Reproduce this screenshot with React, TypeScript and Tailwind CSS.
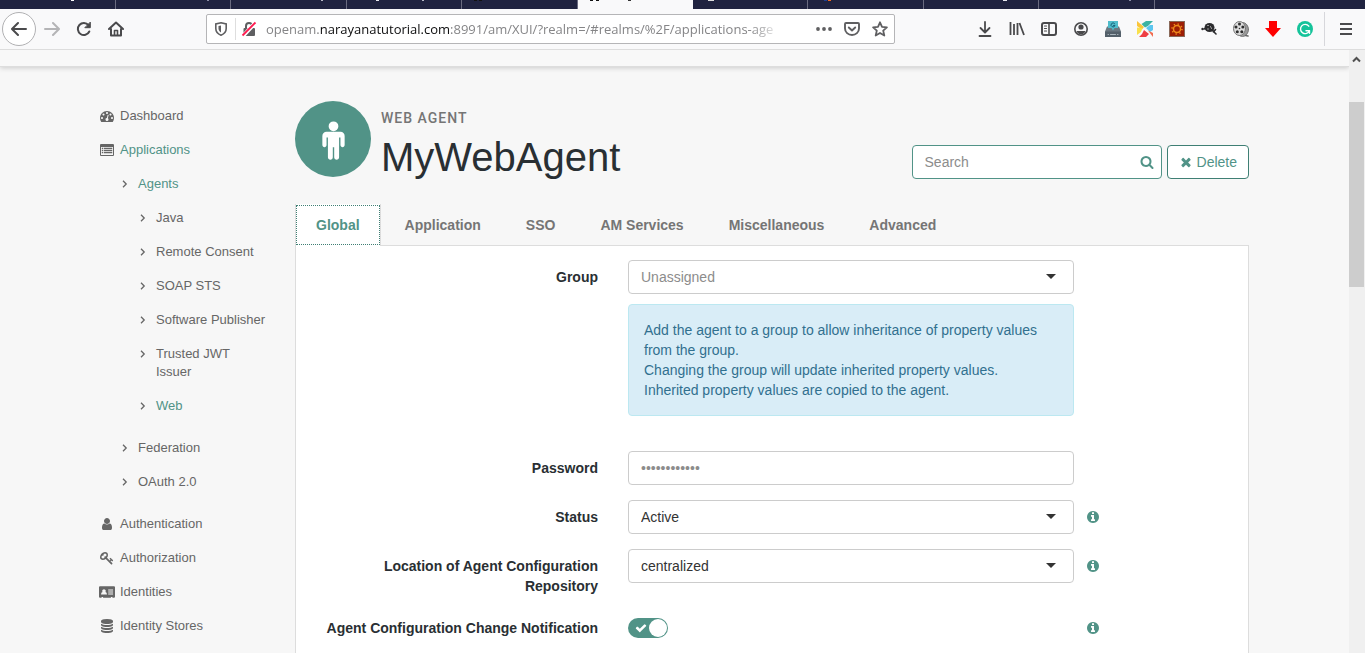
import React, { useState } from 'react';

const FA = {
  dashboard:
    'M384 1152q0-53-37.5-90.5t-90.5-37.5-90.5 37.5-37.5 90.5 37.5 90.5 90.5 37.5 90.5-37.5 37.5-90.5zm192-448q0-53-37.5-90.5t-90.5-37.5-90.5 37.5-37.5 90.5 37.5 90.5 90.5 37.5 90.5-37.5 37.5-90.5zm428 481l101-382q6-26-7.5-48.5t-38.5-29.5-48 6.5-30 39.5l-101 382q-60 5-107 43.5t-63 98.5q-20 77 20 146t117 89 146-20 89-117q16-60-6-117t-72-91zm660-33q0-53-37.5-90.5t-90.5-37.5-90.5 37.5-37.5 90.5 37.5 90.5 90.5 37.5 90.5-37.5 37.5-90.5zm-640-640q0-53-37.5-90.5t-90.5-37.5-90.5 37.5-37.5 90.5 37.5 90.5 90.5 37.5 90.5-37.5 37.5-90.5zm448 192q0-53-37.5-90.5t-90.5-37.5-90.5 37.5-37.5 90.5 37.5 90.5 90.5 37.5 90.5-37.5 37.5-90.5zm320 448q0 261-141 483-19 29-54 29h-1402q-35 0-54-29-141-221-141-483 0-182 71-348t191-286 286-191 348-71 348 71 286 191 191 286 71 348z',
  list:
    'M0 256a130 130 0 0 1 130-130h1532a130 130 0 0 1 130 130v1280a130 130 0 0 1-130 130h-1532a130 130 0 0 1-130-130zM128 512v1024h1536v-1024zM230 600h180v180h-180zM500 600h1070v180h-1070zM230 870h180v180h-180zM500 870h1070v180h-1070zM230 1140h180v180h-180zM500 1140h1070v180h-1070z',
  user:
    'M1536 1399q0 109-62.5 187t-150.5 78h-854q-88 0-150.5-78t-62.5-187q0-85 8.5-160.5t31.5-152 58.5-131 94-89 134.5-34.500q131 128 313 128t313-128q76 0 134.5 34.5t94 89 58.5 131 31.5 152 8.5 160.5zm-256-887q0 159-112.5 271.5t-271.5 112.5-271.5-112.5-112.5-271.5 112.5-271.5 271.5-112.5 271.5 112.5 112.5 271.5z',
  key:
    'M832 512q0-80-56-136t-136-56-136 56-56 136q0 42 19 83-41-19-83-19-80 0-136 56t-56 136 56 136 136 56 136-56 56-136q0-42-19-83 41 19 83 19 80 0 136-56t56-136zm851 704q0 17-49 66t-66 49q-9 0-28.5-16t-36.5-33-38.5-40-24.5-26l-96 96 220 220q28 28 28 68 0 42-39 81t-81 39q-40 0-68-28l-671-671q-176 131-365 131-163 0-265.5-102.5t-102.5-265.5q0-160 95-313t248-248 313-95q163 0 265.5 102.5t102.5 265.5q0 189-131 365l355 355 96-96q-3-3-26-24.5t-40-38.5-33-36.5-16-28.5q0-17 49-66t66-49q13 0 23 10 6 6 46 44.5t82 79.5 86.5 86 73 78 28.5 41z',
  card:
    'M-128 288a130 130 0 0 1 130-130h1788a130 130 0 0 1 130 130v1216a130 130 0 0 1-130 130h-200v-110h-190v110h-1008v-110h-190v110h-200a130 130 0 0 1-130-130zM130 1230h760q0-300-190-330a230 230 0 1 0-380 0q-190 30-190 330zM1050 580v130h620v-130zM1050 840v130h620v-130zM1050 1100v130h620v-130z',
  database:
    'M896 768q237 0 443-43t325-127v170q0 69-103 128t-280 93.5-385 34.5-385-34.5-280-93.5-103-128v-170q119 84 325 127t443 43zm0 768q237 0 443-43t325-127v170q0 69-103 128t-280 93.5-385 34.5-385-34.5-280-93.5-103-128v-170q119 84 325 127t443 43zm0-384q237 0 443-43t325-127v170q0 69-103 128t-280 93.5-385 34.5-385-34.5-280-93.5-103-128v-170q119 84 325 127t443 43zm0-1152q208 0 385 34.5t280 93.5 103 128v128q0 69-103 128t-280 93.5-385 34.5-385-34.5-280-93.5-103-128v-128q0-69 103-128t280-93.5 385-34.5z',
  male:
    'M1408 736v416q0 40-28 68t-68 28-68-28-28-68v-352h-64v912q0 46-33 79t-79 33-79-33-33-79v-464h-64v464q0 46-33 79t-79 33-79-33-33-79v-912h-64v352q0 40-28 68t-68 28-68-28-28-68v-416q0-80 56-136t136-56h640q80 0 136 56t56 136zm-288-448q0 93-65.5 158.5t-158.5 65.5-158.5-65.5-65.5-158.5 65.5-158.5 158.5-65.5 158.5 65.5 65.5 158.5z',
  search:
    'M1216 832q0-185-131.5-316.5t-316.5-131.5-316.5 131.5-131.5 316.5 131.5 316.5 316.5 131.5 316.5-131.5 131.5-316.5zm512 832q0 52-38 90t-90 38q-54 0-90-38l-343-342q-179 124-399 124-143 0-273.5-55.5t-225-150-150-225-55.5-273.5 55.5-273.5 150-225 225-150 273.5-55.5 273.5 55.5 225 150 150 225 55.5 273.5q0 220-124 399l343 343q37 37 37 90z',
  times:
    'M1490 1322q0 40-28 68l-136 136q-28 28-68 28t-68-28l-294-294-294 294q-28 28-68 28t-68-28l-136-136q-28-28-28-68t28-68l294-294-294-294q-28-28-28-68t28-68l136-136q28-28 68-28t68 28l294 294 294-294q28-28 68-28t68 28l136 136q28 28 28 68t-28 68l-294 294 294 294q28 28 28 68z',
  info:
    'M1152 1376v-160q0-14-9-23t-23-9h-96v-512q0-14-9-23t-23-9h-320q-14 0-23 9t-9 23v160q0 14 9 23t23 9h96v320h-96q-14 0-23 9t-9 23v160q0 14 9 23t23 9h448q14 0 23-9t9-23zm-128-896v-160q0-14-9-23t-23-9h-192q-14 0-23 9t-9 23v160q0 14 9 23t23 9h192q14 0 23-9t9-23zm640 416q0 209-103 385.5t-279.5 279.5-385.5 103-385.5-103-279.5-279.5-103-385.5 103-385.5 279.5-279.5 385.5-103 385.5 103 279.5 279.5 103 385.5z',
  check:
    'M1671 566q0 40-28 68l-724 724-136 136q-28 28-68 28t-68-28l-136-136-362-362q-28-28-28-68t28-68l136-136q28-28 68-28t68 28l294 295 656-657q28-28 68-28t68 28l136 136q28 28 28 68z',
};

type IconName = keyof typeof FA;

function Icon({ name, className }: { name: IconName; className?: string }) {
  return (
    <svg viewBox="0 0 1792 1792" fill="currentColor" fillRule="evenodd" className={className} overflow="visible" aria-hidden="true">
      <path d={FA[name]} />
    </svg>
  );
}

// ---------- Browser chrome ----------

// Bottom edge of the tab titles and favicons: [x, width, color]
const browserTabs: { active?: boolean; marks: [number, number, string][] }[] = [
  { marks: [[71, 3, '#ffffff']] },
  { marks: [[91, 2, '#8d8fa8']] },
  { marks: [[90, 2, '#b9bac8']] },
  { marks: [[29, 3, '#e8e8f0'], [75, 2, '#b9bac8']] },
  { marks: [[12, 3, '#111111'], [17, 3, '#111111']] },
  { active: true, marks: [[12, 3, '#111111'], [18, 3, '#111111'], [50, 3, '#333333']] },
  { marks: [[15, 6, '#dddddd']] },
  { marks: [[16, 3, '#1d3f94'], [20, 3, '#f26a21']] },
  { marks: [[79, 4, '#e8e8f0']] },
  { marks: [[90, 2, '#8d8fa8']] },
];

function TabStrip() {
  return (
    <div className="flex h-[9px] bg-[#202340]">
      <div className="flex w-[1155px]">
        {browserTabs.map((tab, i) => (
          <div
            key={i}
            className={tab.active ? 'flex-1 bg-[#f9f9fa]' : 'flex-1 border-r border-[#6a6b80]'}
          >
            <svg width="110" height="2" className="block" aria-hidden="true">
              {tab.marks.map(([x, w, color]) => (
                <rect key={x} x={x} y="0" width={w} height="1" fill={color} />
              ))}
            </svg>
          </div>
        ))}
      </div>
    </div>
  );
}

interface ChromeButtonProps {
  label: string;
  children: React.ReactNode;
  className?: string;
}

function ChromeButton({ label, children, className = 'text-[#4a4a4c]' }: ChromeButtonProps) {
  return (
    <button type="button" aria-label={label} className={`flex h-8 w-8 shrink-0 items-center justify-center ${className}`}>
      <svg width="16" height="16" viewBox="0 0 16 16" fill="none" stroke="currentColor" strokeWidth="2" strokeLinecap="round" strokeLinejoin="round">
        {children}
      </svg>
    </button>
  );
}

function AddressBar() {
  return (
    <div className="flex h-[30px] min-w-0 flex-1 items-center rounded-[2px] border border-[#b5b5b7] bg-white pr-[6px] pl-[6px] text-[#5f5f61]">
      <svg width="16" height="16" viewBox="0 0 16 16" fill="none" stroke="currentColor" className="shrink-0">
        <path d="M8 1.800l5.200 1.200v4.500c0 3-2.200 5.500-5.200 6.700-3-1.200-5.200-3.700-5.200-6.700V3z" strokeWidth="1.600" />
        <path d="M8 4.500v7c-1.500-.8-2.500-2.300-2.500-4V5z" fill="currentColor" stroke="none" />
      </svg>
      <span className="ml-[6px] h-[22px] w-px bg-[#dedede]" />
      <svg width="16" height="16" viewBox="0 0 16 16" fill="none" className="ml-[5px] shrink-0">
        <path d="M5 8V5a3 3 0 0 1 6 0v3" stroke="#5f5f61" strokeWidth="2" />
        <rect x="2.500" y="7" width="11.500" height="8" rx="1" fill="#5f5f61" />
        <path d="M1.500 15.500L14.500 1.500" stroke="#fff" strokeWidth="4" />
        <path d="M1.500 14.500L14.500 1.500" stroke="#ff1a4f" strokeWidth="1.800" />
      </svg>
      <div
        role="textbox"
        aria-label="Address"
        className="ml-[9px] min-w-0 flex-1 font-['Open_Sans',sans-serif] text-[13px] leading-5 whitespace-nowrap text-[#858587] [mask-image:linear-gradient(to_left,transparent,black_32px)]"
      >
        openam.<span className="text-[#0c0c0d]">narayanatutorial.com</span>
        :8991/am/XUI/?realm=/#realms/%2F/applications-age
      </div>
      <div className="ml-[34px] flex shrink-0 items-center gap-3">
        <svg width="16" height="16" viewBox="0 0 16 16" fill="currentColor">
          <circle cx="2" cy="8" r="1.900" />
          <circle cx="8" cy="8" r="1.900" />
          <circle cx="14" cy="8" r="1.900" />
        </svg>
        <svg width="16" height="16" viewBox="0 0 16 16" fill="none" stroke="currentColor" strokeWidth="1.900" strokeLinecap="round" strokeLinejoin="round">
          <path d="M2 2h12a1 1 0 0 1 1 1v4.500a7 6.500 0 0 1-14 0V3a1 1 0 0 1 1-1z" />
          <path d="M4.800 6.500L8 9.500l3.200-3" />
        </svg>
        <svg width="16" height="16" viewBox="0 0 16 16" fill="none" stroke="currentColor" strokeWidth="1.800" strokeLinejoin="round">
          <path d="M8 1.300l2 4.500 4.900.5-3.700 3.300 1.100 4.900L8 12l-4.300 2.500 1.100-4.900L1.100 6.300 6 5.800z" />
        </svg>
      </div>
    </div>
  );
}

function Extensions() {
  return (
    <div className="flex shrink-0">
      <ChromeButton label="Downloads">
        <path d="M8 1v10M3.500 7L8 11.500 12.500 7M2.500 15h11" strokeWidth="1.800" />
      </ChromeButton>
      <ChromeButton label="Library">
        <path d="M1.500 1v13M5 3v11M8.500 2v12M10.500 2l4.500 12" strokeLinecap="butt" strokeWidth="1.800" />
      </ChromeButton>
      <ChromeButton label="Sidebars">
        <rect x="1" y="2" width="14" height="12" rx="2" />
        <path d="M8 2v12" strokeWidth="1.600" />
        <path d="M3.500 5h2M3.500 7.500h2M3.500 10h2" strokeWidth="1.200" />
      </ChromeButton>
      <ChromeButton label="Account">
        <circle cx="8" cy="8" r="6.200" strokeWidth="1.600" />
        <circle cx="8" cy="6" r="2.600" fill="currentColor" stroke="none" />
        <path d="M3.500 10h9c-.8 2.300-2.500 3.500-4.500 3.500s-3.700-1.200-4.500-3.500z" fill="currentColor" stroke="none" />
      </ChromeButton>
      <ChromeButton label="Drive saver">
        <path d="M2 5.500h12l2 5V16H0v-5.500z" fill="#6b7780" stroke="none" />
        <path d="M0 10.500h16V16H0z" fill="#54606a" stroke="none" />
        <path d="M3 0h10v7H9.500L8 9.500 6.500 7H3z" fill="#4fbccb" stroke="none" />
        <path d="M9.600 2.600A2 2 0 1 0 10 4.500H8.500" stroke="#17627a" strokeWidth="1" />
        <path d="M3 13.500h.5M5.500 13.500h5M12.500 13.500h.5" stroke="#aab6bd" strokeWidth="1" />
      </ChromeButton>
      <ChromeButton label="Pinwheel">
        <g stroke="none">
          <path d="M8 6.500L4.500 3 9 0h7l-5 5z" fill="#3bb3a3" />
          <path d="M0 0l7 6-2 2.500L0 5z" fill="#fbc53a" />
          <path d="M0 6.500L5.500 7 4 11l-4 3z" fill="#f9e04b" />
          <path d="M7 9l5 4-3 3H2l3-3z" fill="#ef3e42" />
          <path d="M9 7l4-3h3v5l-3 2z" fill="#5cc6ef" />
          <path d="M11 9.500l5 2.500v4z" fill="#f26b4e" />
        </g>
      </ChromeButton>
      <ChromeButton label="Gear">
        <rect x=".5" y=".5" width="15" height="15" fill="#9c1e05" stroke="#8a6a5a" strokeWidth="1" strokeLinejoin="miter" />
        <circle cx="8" cy="8" r="3.500" stroke="#f08a1c" strokeWidth="1.500" />
        <circle cx="8" cy="8" r="5" stroke="#f08a1c" strokeWidth="1.500" strokeDasharray="1.300 2.627" strokeLinecap="butt" />
      </ChromeButton>
      <ChromeButton label="Beetle">
        <g fill="#2c2c2e" stroke="none">
          <ellipse cx="8.500" cy="6.500" rx="5" ry="4.500" />
          <circle cx="1.500" cy="8" r="1.200" />
        </g>
        <path d="M3 8l3-1M11 9l4 4M12.500 11l2-2.500" stroke="#2c2c2e" strokeWidth="1.600" />
        <path d="M6.500 4.500h1M9.500 5.500l1 2M6.500 8h1" stroke="#a5a5a5" strokeWidth="1" />
      </ChromeButton>
      <ChromeButton label="Film reel">
        <ellipse cx="9.500" cy="8.500" rx="6" ry="7" fill="#9a9a9a" stroke="#777" strokeWidth="1" />
        <ellipse cx="6.500" cy="7.500" rx="6" ry="7" fill="#dcdcdc" stroke="#777" strokeWidth="1" />
        <g fill="#2e2e2e" stroke="none">
          <circle cx="6.500" cy="3" r="1.500" />
          <circle cx="3" cy="6" r="1.500" />
          <circle cx="9.800" cy="6" r="1.500" />
          <circle cx="4.300" cy="10.800" r="1.500" />
          <circle cx="8.800" cy="10.800" r="1.500" />
          <circle cx="6.500" cy="7.500" r=".8" />
        </g>
        <path d="M12.500 14.500l2.500.5" stroke="#666" strokeWidth="1.500" />
      </ChromeButton>
      <ChromeButton label="Video download">
        <path d="M4 0h8v7h4l-8 9-8-9h4z" fill="#fe0000" stroke="none" />
      </ChromeButton>
      <ChromeButton label="Grammar">
        <circle cx="8" cy="8" r="8" fill="#15c39a" stroke="none" />
        <path d="M11.800 5.200a4.600 4.600 0 1 0 .6 4.500H9" stroke="#fff" strokeWidth="1.400" />
        <path d="M12.500 9.700v2.600" stroke="#fff" strokeWidth="1.400" />
      </ChromeButton>
    </div>
  );
}

function BrowserToolbar() {
  return (
    <div className="flex h-[41px] items-center border-b border-[#dddddd] bg-[#f9f9fa] pr-[3px] pl-[2px]">
      <button
        type="button"
        aria-label="Back"
        className="flex h-[34px] w-[34px] shrink-0 items-center justify-center rounded-full border border-[#b1b1b3] bg-white text-[#4a4a4c]"
      >
        <svg width="16" height="16" viewBox="0 0 16 16" fill="none" stroke="currentColor" strokeWidth="2" strokeLinecap="round" strokeLinejoin="round">
          <path d="M15 8H1.500M7 2L1 8l6 6" />
        </svg>
      </button>
      <ChromeButton label="Forward" className="text-[#b4b4b6]">
        <path d="M1 8h13.500M9 2l6 6-6 6" />
      </ChromeButton>
      <ChromeButton label="Reload">
        <path d="M13.300 10.500A6 6 0 1 1 12.500 4.200" />
        <path d="M14.300 1.500v5.200H9.200z" fill="currentColor" strokeWidth="1" />
      </ChromeButton>
      <ChromeButton label="Home">
        <path d="M1 8l7-6.500L15 8M3 8v6.500h10V8" />
        <path d="M6.500 14V9.500h3V14" strokeWidth="1.600" />
      </ChromeButton>
      <div className="ml-[74px] flex min-w-0 flex-1">
        <AddressBar />
      </div>
      <div className="ml-[74px] flex items-center">
        <Extensions />
        <span className="ml-[3px] h-[34px] w-px bg-[#d7d7db]" />
        <div className="ml-[5px]">
          <ChromeButton label="Menu">
            <path d="M2 3h12M2 8h12M2 13h12" strokeLinecap="butt" />
          </ChromeButton>
        </div>
      </div>
    </div>
  );
}

function Scrollbar() {
  return (
    <div className="flex w-4 shrink-0 flex-col bg-[#f0f0f0] pr-px" aria-hidden="true">
      <svg width="15" height="17" viewBox="0 0 15 17" fill="none" stroke="#505050" strokeWidth="2" className="mb-[35px]">
        <path d="M4 11.500L7.500 8 11 11.500" />
      </svg>
      <div className="h-[185px] bg-[#cdcdcd]" />
    </div>
  );
}

// ---------- Side navigation ----------

interface NavItem {
  label: string;
  icon?: IconName;
  active?: boolean;
  children?: NavItem[];
}

const navigation: NavItem[] = [
  { label: 'Dashboard', icon: 'dashboard' },
  {
    label: 'Applications',
    icon: 'list',
    active: true,
    children: [
      {
        label: 'Agents',
        active: true,
        children: [
          { label: 'Java' },
          { label: 'Remote Consent' },
          { label: 'SOAP STS' },
          { label: 'Software Publisher' },
          { label: 'Trusted JWT Issuer' },
          { label: 'Web', active: true },
        ],
      },
      { label: 'Federation' },
      { label: 'OAuth 2.0' },
    ],
  },
  { label: 'Authentication', icon: 'user' },
  { label: 'Authorization', icon: 'key' },
  { label: 'Identities', icon: 'card' },
  { label: 'Identity Stores', icon: 'database' },
];

function NavList({ items, nested = false }: { items: NavItem[]; nested?: boolean }) {
  return (
    <ul className={nested ? 'pb-2 pl-[18px]' : ''}>
      {items.map((item) => (
        <li key={item.label}>
          <a href="#" className="flex gap-[6px] py-2 text-[13px] leading-[18px] text-[#666666]">
            <span className="flex h-[18px] w-[14px] shrink-0 items-center justify-center">
              {item.icon ? (
                <Icon name={item.icon} className="h-[14px] w-[14px]" />
              ) : (
                <svg width="6" height="10" viewBox="0 0 6 10" fill="none" stroke="currentColor" strokeWidth="1.300">
                  <path d="M1 1.800L4.200 5 1 8.200" />
                </svg>
              )}
            </span>
            <span className={item.active ? 'text-[#519387]' : ''}>{item.label}</span>
          </a>
          {item.children && <NavList items={item.children} nested />}
        </li>
      ))}
    </ul>
  );
}

// ---------- Agent page ----------

function AgentHeader() {
  return (
    <header className="flex items-end">
      <div className="flex h-[76px] w-[76px] shrink-0 items-center justify-center self-start rounded-full bg-[#519387] text-white">
        <Icon name="male" className="h-[39px] w-[39px]" />
      </div>
      <div className="ml-[10px] flex-1 pt-[7px]">
        <p className="font-['Roboto',sans-serif] text-sm leading-5 font-medium tracking-[1px] text-[#757575] uppercase">Web Agent</p>
        <h1 className="mt-[7px] text-[40px] leading-[44px] text-[#292f33]">MyWebAgent</h1>
      </div>
      <div className="flex gap-[5px]">
        <label className="flex h-[34px] w-[250px] items-center rounded-[4px] border border-[#519387] bg-white pr-[7px] pl-3 text-[#519387]">
          <input
            type="text"
            aria-label="Search"
            placeholder="Search"
            className="min-w-0 flex-1 text-sm text-[#333333] outline-none placeholder:text-[#8c8c8c]"
          />
          <Icon name="search" className="h-[14px] w-[14px]" />
        </label>
        <button
          type="button"
          className="flex h-[34px] items-center gap-1 rounded-[4px] border border-[#3f7f74] bg-white px-[11px] text-sm text-[#519387]"
        >
          <Icon name="times" className="h-[14px] w-[14px]" />
          Delete
        </button>
      </div>
    </header>
  );
}

const tabs = ['Global', 'Application', 'SSO', 'AM Services', 'Miscellaneous', 'Advanced'];

function AgentTabs() {
  const [activeTab, setActiveTab] = useState('Global');

  return (
    <div role="tablist" className="mt-[25px] flex h-[42px] gap-[3px] border-b border-[#dddddd]">
      {tabs.map((tab) => (
        <button
          key={tab}
          type="button"
          role="tab"
          aria-selected={tab === activeTab}
          onClick={() => setActiveTab(tab)}
          className={
            tab === activeTab
              ? 'h-[42px] border-x border-[#dddddd] bg-white px-5 text-sm font-bold text-[#519387] outline-1 -outline-offset-2 outline-[#3f7f74] outline-dotted'
              : 'h-[42px] border-x border-transparent px-5 text-sm font-bold text-[#757575]'
          }
        >
          {tab}
        </button>
      ))}
    </div>
  );
}

interface FieldProps {
  id: string;
  label: string;
  info?: boolean;
  children: React.ReactNode;
}

function Field({ id, label, info = false, children }: FieldProps) {
  return (
    <div className="grid grid-cols-[332fr_446fr_174fr]">
      <label htmlFor={id} className="pt-[7px] pr-[30px] pl-[15px] text-right text-sm leading-5 font-bold text-[#292f33]">
        {label}
      </label>
      <div>{children}</div>
      <div className="pt-[7px] pl-3">
        {info && (
          <button type="button" aria-label={`About ${label}`} className="flex h-5 items-center text-[#519387]">
            <Icon name="info" className="h-[14px] w-[14px]" />
          </button>
        )}
      </div>
    </div>
  );
}

function SelectBox({ id, options, muted = false }: { id: string; options: string[]; muted?: boolean }) {
  return (
    <div className="relative">
      <select
        id={id}
        className={
          muted
            ? 'h-[34px] w-full appearance-none rounded-[4px] border border-[#cccccc] bg-white px-3 text-sm text-[#8c8c8c]'
            : 'h-[34px] w-full appearance-none rounded-[4px] border border-[#cccccc] bg-white px-3 text-sm text-[#333333]'
        }
      >
        {options.map((option) => (
          <option key={option}>{option}</option>
        ))}
      </select>
      <svg width="10" height="5" viewBox="0 0 10 5" fill="#333333" className="pointer-events-none absolute top-[14px] right-[18px]">
        <path d="M0 0h10L5 5z" />
      </svg>
    </div>
  );
}

function GlobalForm() {
  const [notify, setNotify] = useState(true);

  return (
    <form className="flex flex-1 flex-col gap-[15px] border-x border-[#dddddd] bg-white pt-[14px]">
      <Field id="group" label="Group">
        <SelectBox id="group" options={['Unassigned']} muted />
        <div className="mt-[10px] mb-5 rounded-[4px] border border-[#bce8f1] bg-[#d9edf7] p-[15px] text-sm leading-5 text-[#31708f]">
          <p>Add the agent to a group to allow inheritance of property values from the group.</p>
          <p>Changing the group will update inherited property values.</p>
          <p>Inherited property values are copied to the agent.</p>
        </div>
      </Field>
      <Field id="password" label="Password">
        <input
          id="password"
          type="password"
          placeholder="••••••••••••"
          className="block h-[34px] w-full rounded-[4px] border border-[#cccccc] bg-white px-3 text-sm placeholder:text-[#8c8c8c]"
        />
      </Field>
      <Field id="status" label="Status" info>
        <SelectBox id="status" options={['Active', 'Inactive']} />
      </Field>
      <Field id="location" label="Location of Agent Configuration Repository" info>
        <SelectBox id="location" options={['centralized', 'local']} />
      </Field>
      <Field id="notification" label="Agent Configuration Change Notification" info>
        <label className="mt-[7px] flex h-5 w-10 items-center justify-between rounded-full bg-[#cccccc] pr-px pl-[7px] has-checked:bg-[#519387]">
          <input
            id="notification"
            type="checkbox"
            checked={notify}
            onChange={(e) => setNotify(e.target.checked)}
            className="sr-only"
          />
          <Icon name="check" className="h-3 w-3 text-white" />
          <span className="h-[18px] w-[18px] rounded-full bg-white" />
        </label>
      </Field>
    </form>
  );
}

export default function App() {
  return (
    <div className="flex h-screen flex-col overflow-hidden bg-[#f7f7f7] font-['Liberation_Sans',Arial,sans-serif]">
      <TabStrip />
      <BrowserToolbar />
      <div className="flex min-h-0 flex-1">
        <div className="flex min-w-0 flex-1 flex-col overflow-hidden">
          <div className="h-[17px] shrink-0 border-b border-[#dddddd] bg-[#f8f8f8] shadow-[0_1px_5px_rgba(0,0,0,0.18)]" />
          <div className="mx-auto flex w-full max-w-[1149px] flex-1 gap-7 pt-8">
            <nav aria-label="Realm" className="w-[167px] shrink-0">
              <NavList items={navigation} />
            </nav>
            <main className="flex min-w-0 flex-1 flex-col pt-[2px]">
              <AgentHeader />
              <AgentTabs />
              <GlobalForm />
            </main>
          </div>
        </div>
        <Scrollbar />
      </div>
    </div>
  );
}
